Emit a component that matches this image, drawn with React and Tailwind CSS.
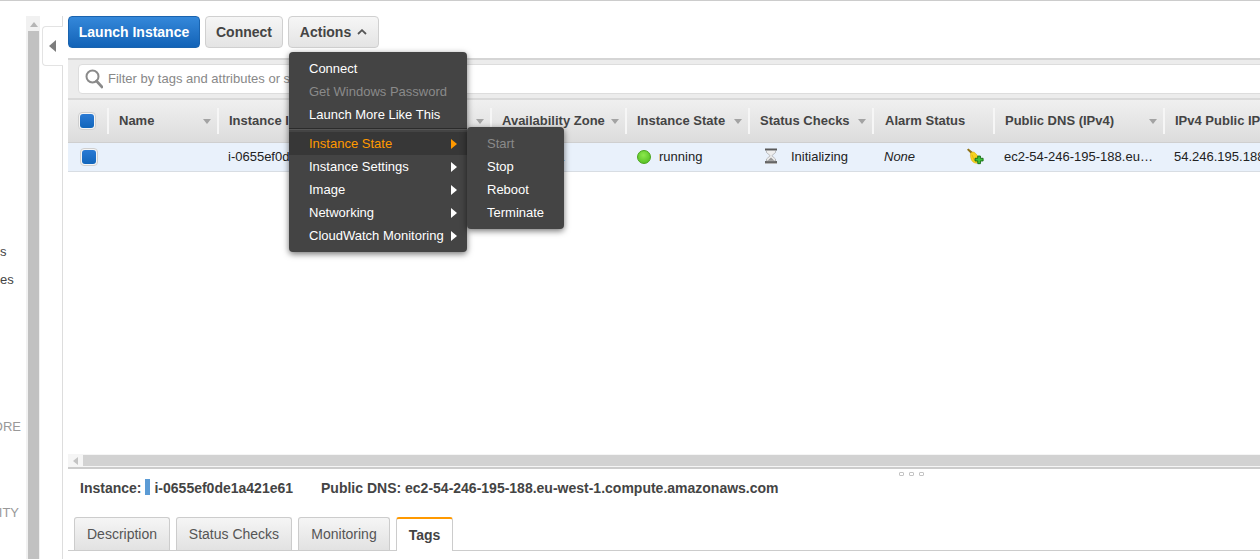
const FONT = "font-['Liberation_Sans',Arial,sans-serif]";

const SortArrow = () => (
  <svg width="8" height="5" viewBox="0 0 8 5" className="shrink-0">
    <path d="M0 0H8L4 5Z" fill="#a3a3a3" />
  </svg>
);

const MenuArrow = ({ color = "#fff" }) => (
  <svg width="6" height="10" viewBox="0 0 6 10" className="shrink-0">
    <path d="M0 0L6 5L0 10Z" fill={color} />
  </svg>
);

const Checkbox = () => (
  <div className="w-[18px] h-[18px] rounded-[4px] border border-[#cfcfcf] bg-[#f5f5f5] flex items-center justify-center">
    <div className="w-[14px] h-[14px] rounded-[3px] bg-gradient-to-b from-[#2a7ad4] to-[#1166bb]" />
  </div>
);

const HeaderCell = ({ w, label, arrow = true, pl = "pl-[10px]" }) => (
  <div className={`${w} shrink-0 h-full flex items-center`}>
    <div className={`flex-1 min-w-0 h-[26px] border-l-2 border-[#f6f6f6] ${pl} pr-[6px] flex items-center justify-between`}>
      <span className="whitespace-nowrap">{label}</span>
      {arrow && <SortArrow />}
    </div>
  </div>
);

const Hourglass = () => (
  <svg width="14" height="16" viewBox="0 0 14 16" className="shrink-0">
    <rect x="1" y="0.5" width="12" height="2" fill="#5a5a5a" />
    <rect x="1" y="13" width="12" height="2" fill="#666" />
    <rect x="1" y="15" width="12" height="1" fill="#b5b5b5" />
    <path d="M2.5 2.5H11.5V4.5L7.8 7.7L11.5 11V13H2.5V11L6.2 7.7L2.5 4.5Z" fill="#eeeeee" stroke="#999" strokeWidth="0.6" />
    <path d="M3.5 12.8L7 9.6L10.5 12.8Z" fill="#9a9a9a" />
  </svg>
);

const Broom = () => (
  <svg width="17" height="17" viewBox="0 0 19 18">
    <path d="M0 1.5L1.5 0L7 4.5L5 6.5Z" fill="#8f7216" />
    <path d="M4 5.5C6 3.5 8 3.5 9.5 5.5L14 10.5L11 16.5C8.5 16.5 6.5 15.5 5 13C4 10.5 3.5 8 4 5.5Z" fill="#f6d21c" stroke="#d8a912" strokeWidth="0.6" />
    <path d="M5.5 7L8 13" stroke="#e9b50f" strokeWidth="1.1" />
    <path d="M12 8.5H15V11H18V14H15V17H12V14H9V11H12Z" fill="#3fc43a" stroke="#13690f" strokeWidth="1" />
  </svg>
);

const SearchIcon = () => (
  <svg width="18" height="20" viewBox="0 0 18 20" className="shrink-0">
    <circle cx="7.5" cy="7.5" r="6" fill="none" stroke="#8a8a8a" strokeWidth="2" />
    <path d="M11.5 12L17 18" stroke="#8a8a8a" strokeWidth="2.6" strokeLinecap="round" />
  </svg>
);

const MenuItem = ({ children, tone = "text-white", arrow, hl }) => (
  <div className={`h-[23px] pl-[20px] pr-[10px] flex items-center justify-between whitespace-nowrap ${tone} ${hl ? "bg-[#373737]" : ""}`}>
    <span>{children}</span>
    {arrow && <MenuArrow color={hl ? "#f90" : "#fff"} />}
  </div>
);

const Tab = ({ w, children, active }) =>
  active ? (
    <div className={`${w} h-[34px] -mb-px bg-white border-x border-[#ccc] border-t-2 border-t-[#f90] rounded-t-[3px] flex items-center justify-center font-bold text-[#444] relative`}>
      {children}
    </div>
  ) : (
    <div className={`${w} h-[33px] bg-gradient-to-b from-[#f5f5f5] to-[#e2e2e2] border-x border-t border-[#ccc] rounded-t-[3px] flex items-center justify-center text-[#555]`}>
      {children}
    </div>
  );

export default function App() {
  return (
    <div className={`${FONT} relative w-[1260px] h-[559px] overflow-hidden bg-white border-t border-[#ccc] flex text-[13px] text-[#222]`}>
      {/* Clipped left navigation */}
      <div className="w-[26px] shrink-0 overflow-hidden flex flex-col text-[#444]">
        <div className="mt-[243px] leading-[15px]">s</div>
        <div className="mt-[13px] leading-[15px] whitespace-nowrap">es</div>
        <div className="mt-[132px] pr-[5px] self-end leading-[15px] text-[#999] whitespace-nowrap">ORE</div>
        <div className="mt-[71px] pr-[7px] self-end leading-[15px] text-[#999] whitespace-nowrap">ITY</div>
      </div>

      {/* Nav scrollbar */}
      <div className="w-[14px] shrink-0 mt-[15px] bg-[#f1f1f1] flex flex-col items-center pl-[1px]">
        <svg width="8" height="5" viewBox="0 0 8 5" className="mt-[6px]">
          <path d="M4 0L8 5H0Z" fill="#b5b5b5" />
        </svg>
        <div className="mt-[4px] w-[11px] flex-1 bg-[#c1c1c1]" />
      </div>

      {/* Collapse gutter */}
      <div className="w-[23px] shrink-0 mt-[15px] border-r border-[#ddd] pl-[2px]">
        <div className="mt-[10px] w-[21px] h-[40px] bg-white border border-r-0 border-[#e3e3e3] rounded-l-[4px] flex items-center pl-[6px]">
          <svg width="7" height="12" viewBox="0 0 7 12">
            <path d="M7 0V12L0 6Z" fill="#7d7d7d" />
          </svg>
        </div>
      </div>

      {/* Main */}
      <div className="flex-1 min-w-0 ml-[5px] flex flex-col overflow-hidden">
        {/* Buttons */}
        <div className="h-[32px] mt-[15px] flex gap-[5px] text-[14px] font-bold shrink-0">
          <div className="w-[132px] rounded-[4px] border border-[#1a63ae] bg-gradient-to-b from-[#3488da] to-[#1263b7] text-white flex items-center justify-center">
            Launch Instance
          </div>
          <div className="w-[78px] rounded-[4px] border border-[#d0d0d0] bg-gradient-to-b from-[#f6f6f6] to-[#e4e4e4] text-[#444] flex items-center justify-center">
            Connect
          </div>
          <div className="w-[91px] rounded-[4px] border border-[#d0d0d0] bg-gradient-to-b from-[#f6f6f6] to-[#e4e4e4] text-[#444] flex items-center justify-center gap-[6px]">
            Actions
            <svg width="10" height="6" viewBox="0 0 10 6">
              <path d="M1 5L5 1.2L9 5" fill="none" stroke="#555" strokeWidth="1.8" />
            </svg>
          </div>
        </div>

        {/* Search toolbar */}
        <div className="mt-[10px] h-[42px] shrink-0 bg-[#ececec] border-y-2 border-[#d5d5d5] pt-[4px] pl-[10px] border-b-[#d9d9d9]">
          <div className="h-[30px] -mr-[10px] bg-white border border-[#ddd] rounded-l-[4px] flex items-center pl-[6px] gap-[5px] text-[#888]">
            <SearchIcon />
            <span>Filter by tags and attributes or search by keyword</span>
          </div>
        </div>

        {/* Table */}
        <div className="h-[43px] shrink-0 flex bg-gradient-to-b from-[#f0f0f0] to-[#dcdcdc] border-b border-[#cfcfcf] font-bold text-[#444]">
          <div className="w-[39px] shrink-0 flex items-center pl-[10px]">
            <Checkbox />
          </div>
          <HeaderCell w="w-[110px]" label="Name" />
          <HeaderCell w="w-[136px]" label="Instance ID" />
          <HeaderCell w="w-[137px]" label="Instance Type" />
          <HeaderCell w="w-[135px]" label="Availability Zone" />
          <HeaderCell w="w-[123px]" label="Instance State" />
          <HeaderCell w="w-[124px]" label="Status Checks" />
          <HeaderCell w="w-[121px]" label="Alarm Status" arrow={false} pl="pl-[11px]" />
          <HeaderCell w="w-[170px]" label="Public DNS (IPv4)" />
          <HeaderCell w="w-[160px]" label="IPv4 Public IP" />
        </div>
        <div className="h-[29px] shrink-0 flex items-center bg-[#e9f1fb] border-b border-[#d8dde3] whitespace-nowrap">
          <div className="w-[40px] shrink-0 pl-[12px]">
            <Checkbox />
          </div>
          <div className="w-[110px] shrink-0" />
          <div className="w-[136px] shrink-0 pl-[10px]">i-0655ef0de1a421e61</div>
          <div className="w-[137px] shrink-0 pl-[10px]">t2.micro</div>
          <div className="w-[135px] shrink-0 pl-[9px]">eu-west-1a</div>
          <div className="w-[123px] shrink-0 pl-[11px] flex items-center gap-[8px]">
            <div className="w-[14px] h-[14px] rounded-full border border-[#46a318] bg-[radial-gradient(circle_at_45%_35%,#8ce84c,#4cb81c)]" />
            running
          </div>
          <div className="w-[124px] shrink-0 pl-[15px] flex items-center gap-[13px]">
            <div className="-mt-[3px]"><Hourglass /></div>
            Initializing
          </div>
          <div className="w-[121px] shrink-0 pl-[11px] flex items-center italic">
            <span className="w-[83px]">None</span>
            <div className="-mt-[2px]"><Broom /></div>
          </div>
          <div className="w-[170px] shrink-0 pl-[10px] pr-[10px] truncate">ec2-54-246-195-188.eu-west-1.compute.amazonaws.com</div>
          <div className="w-[160px] shrink-0 pl-[10px]">54.246.195.188</div>
        </div>

        {/* Empty table area */}
        <div className="flex-1" />

        {/* Horizontal scrollbar */}
        <div className="h-[15px] shrink-0 bg-[#f5f5f5] border-b-2 border-[#ccc] flex items-center">
          <svg width="5" height="8" viewBox="0 0 5 8" className="ml-[5px]">
            <path d="M5 0V8L0 4Z" fill="#c4c4c4" />
          </svg>
          <div className="ml-[5px] flex-1 h-[11px] bg-[#d2d2d2]" />
        </div>

        {/* Detail */}
        <div className="relative h-[48px] shrink-0 pl-[12px] flex items-start pt-[9px] text-[14px] font-bold text-[#444] whitespace-nowrap">
          <div className="absolute left-[831px] top-[3px] flex gap-[5px]">
            <div className="w-[5px] h-[4px] rounded-[1px] border border-[#c4c4c4]" />
            <div className="w-[5px] h-[4px] rounded-[1px] border border-[#c4c4c4]" />
            <div className="w-[5px] h-[4px] rounded-[1px] border border-[#c4c4c4]" />
          </div>
          <span>Instance:</span>
          <span className="ml-[4px] mt-[1px] w-[5px] h-[16px] bg-[#5b9bd5]" />
          <span className="ml-[4px]">i-0655ef0de1a421e61</span>
          <span className="ml-[28px]">Public DNS: ec2-54-246-195-188.eu-west-1.compute.amazonaws.com</span>
        </div>

        {/* Tabs */}
        <div className="h-[34px] shrink-0 pl-[6px] flex items-end gap-[6px] border-b border-[#ccc] text-[14px]">
          <Tab w="w-[96px]">Description</Tab>
          <Tab w="w-[116px]">Status Checks</Tab>
          <Tab w="w-[92px]">Monitoring</Tab>
          <Tab w="w-[57px]" active>Tags</Tab>
        </div>
        <div className="h-[8px] shrink-0" />
      </div>

      {/* Actions menu */}
      <div className="absolute left-[289px] top-[51px] w-[178px] h-[200px] bg-[#444] rounded-[4px] py-[5px] shadow-[0_2px_6px_rgba(0,0,0,0.55)] z-10">
        <MenuItem>Connect</MenuItem>
        <MenuItem tone="text-[#8a8a8a]">Get Windows Password</MenuItem>
        <MenuItem>Launch More Like This</MenuItem>
        <div className="mt-[2px] mb-[2px] h-[2px] border-t border-[#2b2b2b] border-b border-b-[#555]" />
        <MenuItem tone="text-[#f90]" arrow hl>Instance State</MenuItem>
        <MenuItem arrow>Instance Settings</MenuItem>
        <MenuItem arrow>Image</MenuItem>
        <MenuItem arrow>Networking</MenuItem>
        <MenuItem arrow>CloudWatch Monitoring</MenuItem>
      </div>

      {/* Submenu */}
      <div className="absolute left-[467px] top-[126px] w-[97px] h-[102px] bg-[#444] rounded-[4px] pt-[5px] shadow-[0_2px_6px_rgba(0,0,0,0.55)] z-20">
        <MenuItem tone="text-[#8a8a8a]">Start</MenuItem>
        <MenuItem>Stop</MenuItem>
        <MenuItem>Reboot</MenuItem>
        <MenuItem>Terminate</MenuItem>
      </div>
    </div>
  );
}
